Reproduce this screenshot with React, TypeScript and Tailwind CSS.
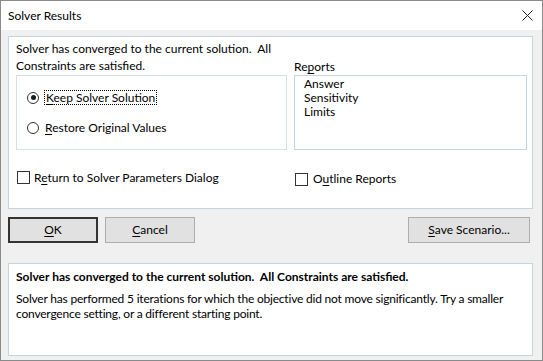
import React from 'react'

const font = { fontFamily: '"Segoe UI", Lato, "Noto Sans", sans-serif' }

function U({ children }: { children: React.ReactNode }) {
  return <span className="underline underline-offset-2">{children}</span>
}

function Radio({ checked }: { checked?: boolean }) {
  return (
    <span className="flex h-[12px] w-[12px] items-center justify-center rounded-full border border-[#333] bg-white">
      {checked && <span className="h-[5px] w-[5px] rounded-full bg-[#1a1a1a]" />}
    </span>
  )
}

function Check() {
  return <span className="block h-[13px] w-[13px] border border-[#333] bg-white" />
}

function Btn({ children, primary, w }: { children: React.ReactNode; primary?: boolean; w: string }) {
  return (
    <button
      className={
        'flex h-[26px] items-center justify-center bg-[#e1e1e1] text-[12px] text-black ' +
        w +
        (primary ? ' border-2 border-[#333]' : ' border border-[#adadad]')
      }
    >
      {children}
    </button>
  )
}

export default function App() {
  return (
    <div
      style={font}
      className="flex h-[361px] w-[543px] flex-col border border-[#8a8a8a] bg-[#f0f0f0] text-[12px] text-black"
    >
      {/* Title bar */}
      <div className="flex h-[29px] shrink-0 items-center justify-between bg-white pl-[7px] pr-[9px]">
        <span>Solver Results</span>
        <svg width="11" height="11" viewBox="0 0 11 11" className="stroke-[#222]">
          <path d="M0.5 0.5 L10.5 10.5 M10.5 0.5 L0.5 10.5" strokeWidth="1" />
        </svg>
      </div>

      <div className="flex flex-col px-[7px]">
        {/* Top panel */}
        <div className="mt-[6px] h-[173px] w-[525px] border border-[#c5d4e2] bg-white pl-[7px] pt-[3px]">
          <div className="flex gap-[7px]">
            <div className="flex w-[271px] flex-col">
              <div className="h-[35px] leading-[17px]">
                Solver has converged to the current solution.&nbsp; All
                <br />
                Constraints are satisfied.
              </div>
              <div className="flex h-[75px] flex-col border border-[#d6dde5] pl-[10px] pt-[14px]">
                <div className="flex items-center gap-[5px]">
                  <Radio checked />
                  <span className="border border-dotted border-black px-[1px] leading-[13px]">
                    <U>K</U>eep Solver Solution
                  </span>
                </div>
                <div className="mt-[16px] flex items-center gap-[5px]">
                  <Radio />
                  <span className="px-[1px] leading-[13px]">
                    <U>R</U>estore Original Values
                  </span>
                </div>
              </div>
            </div>
            <div className="flex w-[233px] flex-col justify-end">
              <div className="leading-[16px]">
                Re<U>p</U>orts
              </div>
              <div className="flex h-[75px] flex-col border border-[#c5d4e2] pl-[9px] pt-[1px] leading-[14px]">
                <span>Answer</span>
                <span>Sensitivity</span>
                <span>Limits</span>
              </div>
            </div>
          </div>
          <div className="mt-[17px] flex">
            <div className="flex w-[278px] items-center gap-[4px] pl-[1px]">
              <Check />
              <span>
                R<U>e</U>turn to Solver Parameters Dialog
              </span>
            </div>
            <div className="mt-[3px] flex items-center gap-[5px] pl-[1px]">
              <Check />
              <span>
                O<U>u</U>tline Reports
              </span>
            </div>
          </div>
        </div>

        {/* Buttons */}
        <div className="mt-[8px] flex h-[26px] items-center">
          <Btn primary w="w-[90px]">
            <U>O</U>K
          </Btn>
          <div className="ml-[7px]">
            <Btn w="w-[90px]">
              <U>C</U>ancel
            </Btn>
          </div>
          <div className="ml-auto mr-[5px]">
            <Btn w="w-[122px]">
              <U>S</U>ave Scenario...
            </Btn>
          </div>
        </div>

        {/* Message panel */}
        <div className="mt-[20px] h-[93px] w-[525px] border border-[#c5d4e2] bg-white pl-[7px] pt-[5px] leading-[15px]">
          <div className="font-bold">
            Solver has converged to the current solution.&nbsp; All Constraints are satisfied.
          </div>
          <div className="mt-[7px] w-[512px] tracking-[-0.2px]">
            Solver has performed 5 iterations for which the objective did not move significantly. Try a smaller
            convergence setting, or a different starting point.
          </div>
        </div>
      </div>
    </div>
  )
}
